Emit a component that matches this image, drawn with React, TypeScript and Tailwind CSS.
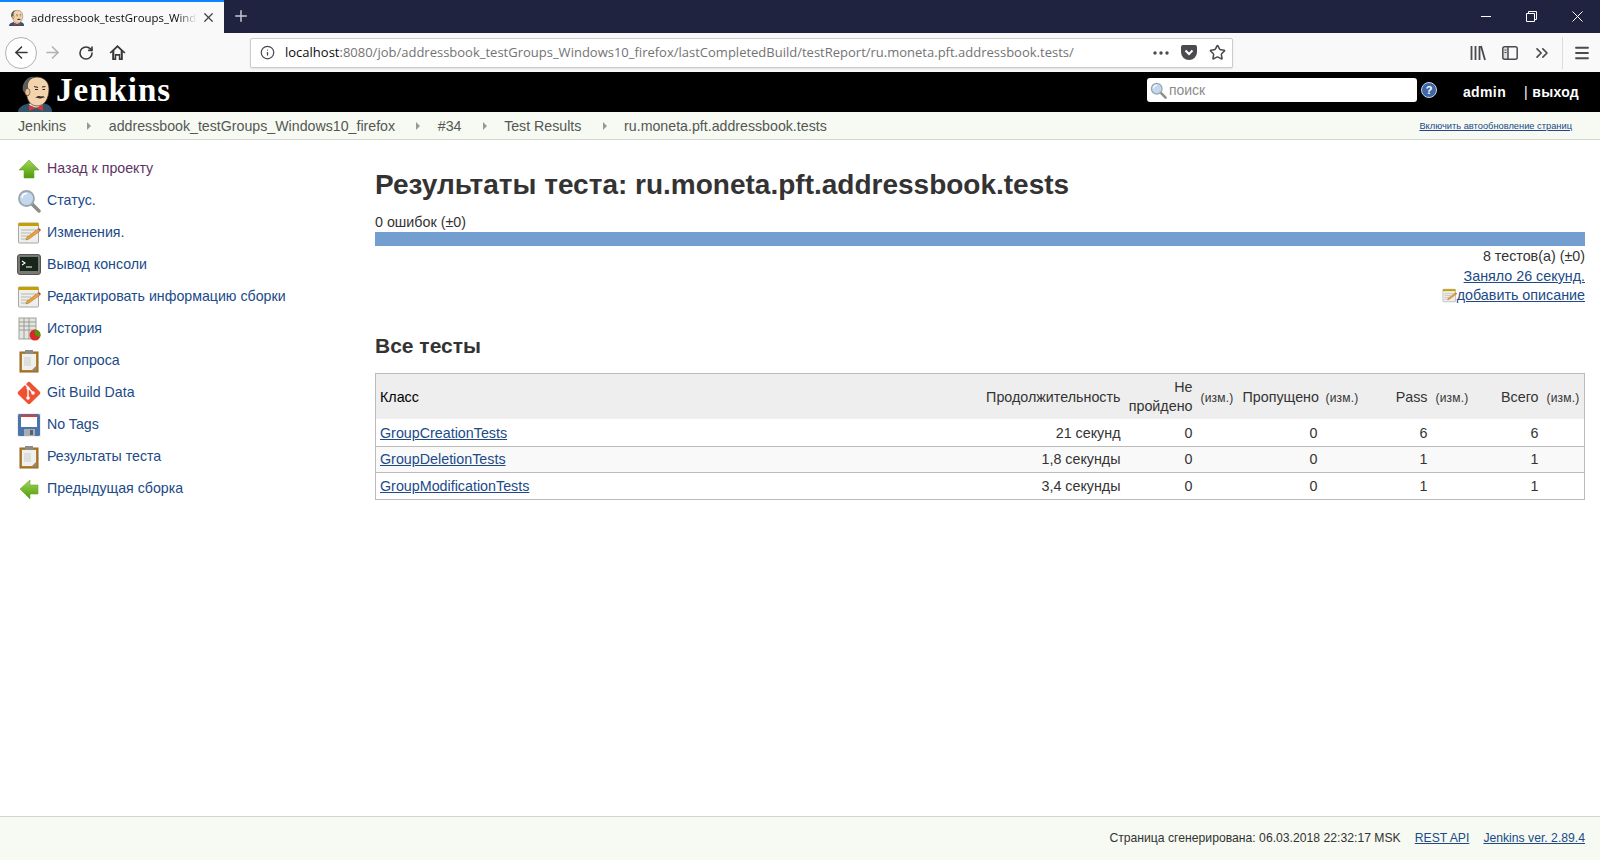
import React from "react";
import { ArrowLeft, ArrowRight, RotateCw, Info, Star, ChevronsRight, Menu, X, Plus } from "lucide-react";

const JenkinsHead = ({ size = 36 }: { size?: number }) => (
  <svg width={size} height={(size * 38) / 36} viewBox="0 0 36 38">
    <path d="M0 38c0-4 4-7 9-8l4-2h10l5 2c4 1 6 4 6 8z" fill="#33536b" />
    <path d="M13 28l5 4 5-4 2 3-7 3-7-3z" fill="#f4f4f0" />
    <path d="M11 31l6 2.500h2l6-2.500v6l-6-2.500h-2l-6 2.500z" fill="#d33833" />
    <path d="M8 14C8 7 13 3 19 3s12 4 12 12c0 9-4 17-12 17-5 0-9-4-10-9z" fill="#f3d3ae" stroke="#3a2a20" strokeWidth=".7" />
    <path d="M11 22C5 20 3 14 6 9c2-4 6-7 11-6-5 1-7 5-7 9 0 3 1 7 1 10z" fill="#5d5d5a" />
    <ellipse cx="9.500" cy="18" rx="2.500" ry="3.500" fill="#eabf97" stroke="#3a2a20" strokeWidth=".5" />
    <path d="M16 12.500l4 1M24 13l3.500-.5" stroke="#3a2a20" strokeWidth="1.100" fill="none" />
    <path d="M17 15.500h3M24.500 15.500h2.500" stroke="#222" strokeWidth="1" />
    <path d="M17 24c2-2.500 5-2.500 6-1.500 1-.5 3-.5 4 1-3 0-3 1-5 1s-3-1-5-.5z" fill="#3a2a20" />
  </svg>
);

const Arrow = ({ dir }: { dir: "up" | "left" }) => (
  <svg width="24" height="24" viewBox="0 0 24 24">
    <defs>
      <linearGradient id={`grad-${dir}`} x1="0" y1="0" x2="0" y2="1">
        <stop offset="0" stopColor="#a4d65a" />
        <stop offset="1" stopColor="#4e9a06" />
      </linearGradient>
    </defs>
    {dir === "up" ? (
      <path d="M12 3l10 10h-5v8H7v-8H2z" fill={`url(#grad-${dir})`} stroke="#6aa82c" strokeWidth=".6" />
    ) : (
      <path d="M3 12L13 3v5h8v9h-8v5z" fill={`url(#grad-${dir})`} stroke="#6aa82c" strokeWidth=".6" />
    )}
  </svg>
);

const SearchIcon = ({ size = 24 }: { size?: number }) => (
  <svg width={size} height={size} viewBox="0 0 24 24">
    <path d="M15 15l7 7" stroke="#8a8f8a" strokeWidth="3.500" strokeLinecap="round" />
    <circle cx="9.500" cy="9.500" r="7.500" fill="#c3d8ee" stroke="#9aa6b0" strokeWidth="1.800" />
    <path d="M5 9c0-3 2-4.500 5-4.500" stroke="#fff" strokeWidth="1.500" fill="none" />
  </svg>
);

const Notepad = ({ size = 24 }: { size?: number }) => (
  <svg width={size} height={size} viewBox="0 0 24 24">
    <rect x="1.500" y="2" width="20" height="20" rx="1" fill="#eeeeec" stroke="#a8a89f" />
    <rect x="1.500" y="2" width="20" height="3" fill="#c4a000" />
    <path d="M4 9h15M4 12h10M4 15h7M4 18h6" stroke="#b8b8b0" />
    <path d="M9 19l1-3L21 8l2 2-11 8z" fill="#e9a13b" stroke="#a5651a" strokeWidth=".5" />
    <path d="M21 8l2 2 1-1-2-2z" fill="#cc3b3b" />
  </svg>
);

const Terminal = () => (
  <svg width="24" height="24" viewBox="0 0 24 24">
    <rect x=".5" y="1.500" width="23" height="20" rx="2.500" fill="#777a72" stroke="#555" />
    <rect x="3" y="4" width="18" height="14" fill="#17251b" />
    <path d="M5 8l3 2-3 2" stroke="#fff" strokeWidth="1.100" fill="none" />
    <path d="M9 14h6" stroke="#fff" />
  </svg>
);

const History = () => (
  <svg width="24" height="24" viewBox="0 0 24 24">
    <rect x="2" y="1" width="17" height="21" fill="#e4e4e0" stroke="#a0a09a" />
    <path d="M2 5h17M2 9h17M2 13h17M7 1v21M12 1v21" stroke="#8d8d88" strokeWidth=".8" />
    <circle cx="18" cy="18" r="5.500" fill="#d52a2a" />
    <path d="M18 18v-5.500a5.500 5.500 0 0 1 5 7.500z" fill="#4e9a06" />
  </svg>
);

const Clipboard = () => (
  <svg width="24" height="24" viewBox="0 0 24 24">
    <rect x="3" y="3" width="18" height="20" fill="#b0802f" stroke="#8f6520" />
    <rect x="5" y="5" width="14" height="16" fill="#efefed" />
    <path d="M7 8h7v9H7z" fill="#dededb" />
    <path d="M8 1h8v4H8z" fill="#8c8c88" />
    <path d="M15 21l4-4v4z" fill="#888" />
  </svg>
);

const GitIcon = () => (
  <svg width="24" height="24" viewBox="0 0 24 24">
    <rect x="3.500" y="3.500" width="17" height="17" rx="2" fill="#f05133" transform="rotate(45 12 12)" />
    <path d="M8 3l8 9M11 7v10" stroke="#fff" strokeWidth="1.400" />
    <circle cx="11" cy="7" r="1.600" fill="#fff" />
    <circle cx="11" cy="17" r="1.800" fill="#fff" />
    <circle cx="16" cy="12" r="1.800" fill="#fff" />
  </svg>
);

const Floppy = () => (
  <svg width="24" height="24" viewBox="0 0 24 24">
    <rect x="0" y="0" width="24" height="24" fill="#eeeeec" />
    <rect x="1" y="1" width="22" height="22" rx="1.500" fill="#4a74ae" />
    <rect x="4" y="2" width="16" height="12" fill="#fff" />
    <rect x="4" y="2" width="16" height="2" fill="#e03a2e" />
    <rect x="7" y="16" width="11" height="7" fill="#a8adb3" />
    <rect x="13" y="17" width="3" height="5" fill="#5b6068" />
  </svg>
);

const sideItems: { icon: React.ReactNode; label: string; visited?: boolean }[] = [
  { icon: <Arrow dir="up" />, label: "Назад к проекту", visited: true },
  { icon: <SearchIcon />, label: "Статус." },
  { icon: <Notepad />, label: "Изменения." },
  { icon: <Terminal />, label: "Вывод консоли" },
  { icon: <Notepad />, label: "Редактировать информацию сборки" },
  { icon: <History />, label: "История" },
  { icon: <Clipboard />, label: "Лог опроса" },
  { icon: <GitIcon />, label: "Git Build Data" },
  { icon: <Floppy />, label: "No Tags" },
  { icon: <Clipboard />, label: "Результаты теста" },
  { icon: <Arrow dir="left" />, label: "Предыдущая сборка" },
];

const crumbs = ["Jenkins", "addressbook_testGroups_Windows10_firefox", "#34", "Test Results", "ru.moneta.pft.addressbook.tests"];

const rows = [
  { name: "GroupCreationTests", time: "21 секунд", fail: 0, skip: 0, pass: 6, total: 6, h: "h-[27px]", bg: "bg-white" },
  { name: "GroupDeletionTests", time: "1,8 секунды", fail: 0, skip: 0, pass: 1, total: 1, h: "h-[26px]", bg: "bg-[#f9f9f9]" },
  { name: "GroupModificationTests", time: "3,4 секунды", fail: 0, skip: 0, pass: 1, total: 1, h: "h-[27px]", bg: "bg-white" },
];

const Browser = () => (
  <div className="font-['Open_Sans',sans-serif]">
    <div className="flex h-[33px] bg-[#202340]">
      <div className="flex w-[224px] items-center border-t-2 border-[#0a84ff] bg-[#f9f9fa] pl-[9px] pr-[6px]">
        <JenkinsHead size={16} />
        <span className="ml-[6px] w-[166px] overflow-hidden whitespace-nowrap text-[11.400px] text-[#0c0c0d] [mask-image:linear-gradient(to_right,black_88%,transparent)]">addressbook_testGroups_Windows10_firefox</span>
        <X size={15} className="ml-[4px] text-[#444]" />
      </div>
      <Plus size={18} className="ml-[8px] mt-[7px] text-[#c8c9d2]" />
      <div className="ml-auto flex items-center gap-[35px] pr-[17px] text-white">
        <div className="h-px w-[10px] bg-white" />
        <svg width="11" height="11" viewBox="0 0 11 11" fill="none" stroke="#fff">
          <path d="M.5 2.500h8v8h-8zM2.500 2.500v-2h8v8h-2" />
        </svg>
        <svg width="11" height="11" viewBox="0 0 11 11" stroke="#fff"><path d="M.5.500l10 10M10.500.500l-10 10" /></svg>
      </div>
    </div>
    <div className="flex h-[39px] items-center bg-[#f9f9fa]">
      <div className="ml-[5px] flex h-[32px] w-[32px] items-center justify-center rounded-full border border-[#b1b1b3] bg-white">
        <ArrowLeft size={19} className="text-[#3a3a3c]" />
      </div>
      <ArrowRight size={19} className="ml-[6px] text-[#b1b1b3]" />
      <RotateCw size={16} className="ml-[16px] text-[#3a3a3c]" strokeWidth={2.400} />
      <svg width="17" height="17" viewBox="0 0 16 16" className="ml-[15px]" fill="#3a3a3c">
        <path d="M8 1L0.500 8l1 1L3 7.700V15h3.800v-4h2.400v4H13V7.700L14.500 9l1-1zM5 13.500V6l3-2.800L11 6v7.500h-.5V9.500h-5v4z" />
      </svg>
      <div className="ml-[124px] flex h-[30px] w-[983px] items-center rounded-[2px] border border-[#cccccc] bg-white shadow-[0_1px_2px_rgba(0,0,0,0.1)]">
        <Info size={15} className="ml-[9px] text-[#4a4a4f]" />
        <span className="ml-[10px] whitespace-nowrap text-[13px] text-[#737373]">
          <span className="text-[#0c0c0d]">localhost</span>:8080/job/addressbook_testGroups_Windows10_firefox/lastCompletedBuild/testReport/ru.moneta.pft.addressbook.tests/
        </span>
        <div className="ml-auto flex items-center pr-[6px]">
          <svg width="16" height="4" viewBox="0 0 16 4" fill="#4a4a4f"><circle cx="2" cy="2" r="1.700" /><circle cx="8" cy="2" r="1.700" /><circle cx="14" cy="2" r="1.700" /></svg>
          <svg width="16" height="15" viewBox="0 0 16 15" className="ml-[12px]" fill="#4a4a4f">
            <path d="M2 0h12a2 2 0 0 1 2 2v5a8 8 0 0 1-16 0V2a2 2 0 0 1 2-2z" />
            <path d="M4.500 5.500L8 9l3.500-3.500" stroke="#fff" strokeWidth="2" fill="none" />
          </svg>
          <Star size={17} className="ml-[12px] text-[#4a4a4f]" strokeWidth={2.200} />
        </div>
      </div>
      <div className="ml-[237px] flex items-center text-[#4a4a4f]">
        <svg width="16" height="16" viewBox="0 0 16 16" stroke="#4a4a4f" strokeWidth="1.800" fill="none">
          <path d="M1.500 1v14M5.500 1v14M9.500 1v14M11 1l4 14" />
        </svg>
        <svg width="16" height="14" viewBox="0 0 16 14" className="ml-[16px]" fill="none" stroke="#4a4a4f" strokeWidth="1.500">
          <rect x=".8" y=".8" width="14.400" height="12.400" rx="2" />
          <path d="M6 1v12" />
          <path d="M2.500 4h2M2.500 6.500h2" strokeWidth="1" />
          <path d="M1 2h5v11H1z" fill="#4a4a4f" fillOpacity="0.150" stroke="none" />
        </svg>
        <ChevronsRight size={20} className="ml-[14px]" />
        <div className="ml-[10px] h-[32px] w-px bg-[#dcdcde]" />
        <Menu size={18} className="ml-[10px]" strokeWidth={2.400} />
      </div>
    </div>
  </div>
);

const Header = () => (
  <div className="flex h-[40px] items-center bg-black text-white">
    <div className="ml-[18px] flex h-[40px] items-end overflow-hidden">
      <JenkinsHead size={36} />
    </div>
    <span className="ml-[2px] pb-[3px] font-['Liberation_Serif',serif] text-[33px] font-bold leading-none tracking-[1px]">Jenkins</span>
    <div className="ml-auto flex items-center pb-[4px]">
      <div className="flex h-[24px] w-[270px] items-center rounded-[3px] bg-white pl-[3px]">
        <SearchIcon size={17} />
        <span className="ml-[2px] text-[14px] text-[#8c8c8c]">поиск</span>
      </div>
      <svg width="16" height="16" viewBox="0 0 16 16" className="ml-[4px]">
        <circle cx="8" cy="8" r="7.500" fill="#3f66a8" stroke="#c7d4e8" />
        <text x="8" y="12" textAnchor="middle" fill="#fff" fontSize="11" fontWeight="bold" fontFamily="Liberation Sans">?</text>
      </svg>
      <span className="ml-[26px] mt-[4px] text-[14px] font-bold tracking-[0.4px]">admin</span>
      <span className="ml-[18px] mr-[21px] mt-[4px] text-[14px] font-bold tracking-[0.3px]">
        <span className="font-normal">|</span> выход
      </span>
    </div>
  </div>
);

const Breadcrumbs = () => (
  <div className="flex h-[28px] items-center border-b border-[#d3d7cf] bg-[#f6faf2] pl-[18px] pr-[28px] pt-[2px] text-[14.200px] text-[#555753]">
    {crumbs.map((c, i) => (
      <div key={c} className="flex items-center">
        <span>{c}</span>
        {i < crumbs.length - 1 && (
          <span className="flex w-[42.700px] justify-center pl-[4px]">
            <span className="h-0 w-0 border-y-[4px] border-l-[4px] border-y-transparent border-l-[#999]" />
          </span>
        )}
      </div>
    ))}
    <a className="ml-auto mt-[1px] text-[9.300px] text-[#204a87] underline">Включить автообновление страниц</a>
  </div>
);

const Sidebar = () => (
  <div className="flex w-[375px] shrink-0 flex-col pl-[17px] pt-[13px]">
    {sideItems.map((item) => (
      <div key={item.label} className="flex h-[32px] items-center">
        <span className="flex w-[24px] justify-center">{item.icon}</span>
        <span className={`ml-[6px] text-[14.200px] ${item.visited ? "text-[#5c3566]" : "text-[#204a87]"}`}>{item.label}</span>
      </div>
    ))}
  </div>
);

const Change = () => <span className="text-[12px] tracking-[0.2px]">(изм.)</span>;

const ResultsTable = () => (
  <table className="w-[1210px] table-fixed border-collapse border border-[#bbbbbb] text-[14.300px] text-[#333]">
    <colgroup>
      <col />
      <col className="w-[150px]" />
      <col className="w-[72px]" />
      <col className="w-[42px]" />
      <col className="w-[83px]" />
      <col className="w-[41px]" />
      <col className="w-[69px]" />
      <col className="w-[42px]" />
      <col className="w-[69px]" />
      <col className="w-[42px]" />
    </colgroup>
    <thead>
      <tr className="h-[46px] bg-[#eeeeee] leading-[19px]">
        <th className="px-[4px] pt-[3px] text-left font-normal text-black">Класс</th>
        <th className="px-[4px] pt-[3px] text-right font-normal">Продолжительность</th>
        <th className="px-[4px] pt-[1px] text-right font-normal">Не пройдено</th>
        <th className="px-[4px] pt-[3px] text-left font-normal"><Change /></th>
        <th className="px-[4px] pt-[3px] text-right font-normal">Пропущено</th>
        <th className="px-[4px] pt-[3px] text-left font-normal"><Change /></th>
        <th className="px-[4px] pt-[3px] text-right font-normal">Pass</th>
        <th className="px-[4px] pt-[3px] text-left font-normal"><Change /></th>
        <th className="px-[4px] pt-[3px] text-right font-normal">Всего</th>
        <th className="px-[4px] pt-[3px] text-left font-normal"><Change /></th>
      </tr>
    </thead>
    <tbody>
      {rows.map((r) => (
        <tr key={r.name} className={`${r.h} ${r.bg} border-b border-[#bbbbbb]`}>
          <td className="px-[4px] pt-[2px]"><a className="text-[#204a87] underline">{r.name}</a></td>
          <td className="px-[4px] pt-[2px] text-right">{r.time}</td>
          <td className="px-[4px] pt-[2px] text-right">{r.fail}</td>
          <td />
          <td className="px-[4px] pt-[2px] text-right">{r.skip}</td>
          <td />
          <td className="px-[4px] pt-[2px] text-right">{r.pass}</td>
          <td />
          <td className="px-[4px] pt-[2px] text-right">{r.total}</td>
          <td />
        </tr>
      ))}
    </tbody>
  </table>
);

const Content = () => (
  <div className="w-[1210px] pt-[26px] text-[14.300px] text-[#333]">
    <h1 className="text-[28px] font-bold leading-[38px]">Результаты теста: ru.moneta.pft.addressbook.tests</h1>
    <div className="mt-[9px] leading-[18px]">0 ошибок (±0)</div>
    <div className="mt-[1px] h-[14px] bg-[#729fcf]" />
    <div className="mt-[1px] flex flex-col items-end leading-[19.500px]">
      <span>8 тестов(а) (±0)</span>
      <a className="text-[#204a87] underline">Заняло 26 секунд.</a>
      <a className="flex items-center text-[#204a87] underline">
        <Notepad size={15} />
        добавить описание
      </a>
    </div>
    <h2 className="mb-[13px] mt-[26px] text-[21px] font-bold leading-[28px]">Все тесты</h2>
    <ResultsTable />
  </div>
);

const Footer = () => (
  <div className="flex h-[44px] items-center justify-end gap-[14px] border-t border-[#d3d7cf] bg-[#f6faf2] pb-[1px] pr-[15px] text-[12.200px] text-[#333]">
    <span>Страница сгенерирована: 06.03.2018 22:32:17 MSK</span>
    <a className="text-[#204a87] underline">REST API</a>
    <a className="text-[#204a87] underline">Jenkins ver. 2.89.4</a>
  </div>
);

export default function App() {
  return (
    <div className="flex h-[860px] flex-col overflow-hidden bg-white font-['Liberation_Sans',Arial,sans-serif]">
      <Browser />
      <Header />
      <Breadcrumbs />
      <div className="flex flex-1">
        <Sidebar />
        <Content />
      </div>
      <Footer />
    </div>
  );
}
